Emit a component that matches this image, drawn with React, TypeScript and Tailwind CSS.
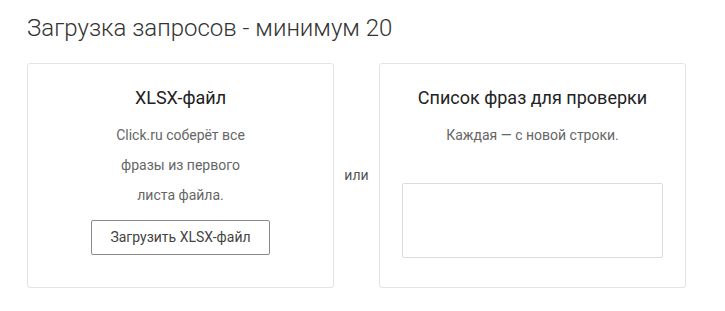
import React from "react";

const cardText = "font-['Roboto',sans-serif]";

const Card = ({ children }: { children: React.ReactNode }) => (
  <div className="w-[307px] h-[225px] rounded-[3px] border border-[#e3e3e3] bg-white px-[23px] pt-[22px] flex flex-col items-center">
    {children}
  </div>
);

export default function App() {
  return (
    <div className="w-[725px] h-[311px] bg-white pl-[27px] pt-[12px]">
      <h1 className="font-['Roboto',sans-serif] font-light text-[24px] leading-[32px] text-[#333]">
        Загрузка запросов - минимум 20
      </h1>
      <div className="mt-[19px] flex items-center">
        <Card>
          <div className={`${cardText} text-[18px] leading-[24px] text-[#222]`}>XLSX-файл</div>
          <p className={`${cardText} mt-[10px] w-[150px] text-center text-[14px] leading-[30px] text-[#666]`}>
            Click.ru соберёт все фразы из первого листа файла.
          </p>
          <button className={`${cardText} mt-[10px] w-[179px] h-[35px] rounded-[2px] border border-[#8a8a8a] text-[14px] text-[#444]`}>
            Загрузить XLSX-файл
          </button>
        </Card>
        <div className={`${cardText} w-[45px] text-center text-[14px] text-[#555]`}>или</div>
        <Card>
          <div className={`${cardText} text-[18px] leading-[24px] text-[#222]`}>Список фраз для проверки</div>
          <p className={`${cardText} mt-[10px] text-center text-[14px] leading-[30px] text-[#666]`}>
            Каждая — с новой строки.
          </p>
          <textarea className="mt-[33px] w-[261px] h-[75px] resize-none rounded-[2px] border border-[#dcdcdc] outline-none" />
        </Card>
      </div>
    </div>
  );
}
